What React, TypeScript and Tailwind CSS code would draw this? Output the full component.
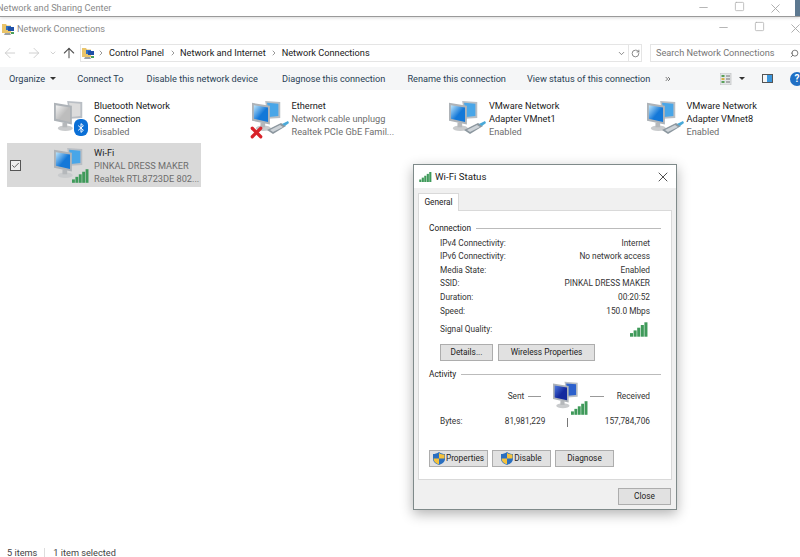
import { ArrowLeft, ArrowRight, ArrowUp, Check, ChevronDown, ChevronRight, ChevronsRight, Minus, RotateCw, Search, Square, X } from "lucide-react";

const Bars = ({ className }: { className: string }) => (
  <svg viewBox="0 0 20 16" className={className}>
    <rect x="0" y="12" width="3.4" height="4" fill="#3f9a5a" />
    <rect x="4" y="9" width="3.4" height="7" fill="#3f9a5a" />
    <rect x="8" y="6" width="3.4" height="10" fill="#3f9a5a" />
    <rect x="12" y="3" width="3.4" height="13" fill="#3f9a5a" />
    <rect x="16" y="0" width="3.4" height="16" fill="#3f9a5a" />
  </svg>
);

const Monitors = ({ gray, dark, className }: { gray?: boolean; dark?: boolean; className: string }) => {
  const id = gray ? "scr-gray" : dark ? "scr-dark" : "scr-blue";
  const from = gray ? "#f2f2f2" : dark ? "#4f7be0" : "#bfe6fb";
  const to = gray ? "#bdbdbd" : dark ? "#14299e" : "#1478d8";
  const back = gray ? "#dcdcdc" : dark ? "#2c60cc" : "#49a6e8";
  return (
    <svg viewBox="0 0 36 34" className={className}>
      <defs>
        <linearGradient id={id} x1="0" y1="0" x2="1" y2="1">
          <stop offset="0" stopColor={from} />
          <stop offset="0.55" stopColor={to} />
          <stop offset="1" stopColor={to} />
        </linearGradient>
      </defs>
      <path d="M15 1 L31 2 V19 L18 20 Z" fill="#b9bec4" />
      <path d="M17 3 L29 4 V17 L19 18 Z" fill={back} />
      <path d="M1 3 L20 6 V26 L1 22 Z" fill="#aeb3b8" />
      <path d="M3 5.5 L18 8 V23.5 L3 20 Z" fill={`url(#${id})`} />
      <ellipse cx="13" cy="30" rx="8" ry="3" fill="#c9cbcd" />
      <rect x="10" y="24" width="5" height="5" fill="#b5b8bb" />
    </svg>
  );
};

const FolderNet = () => (
  <svg viewBox="0 0 12 12" className="w-[12px] h-[12px] shrink-0">
    <path d="M0 1 H4 L5 2.5 H9 V10 H0 Z" fill="#e9c46a" />
    <rect x="4" y="3" width="5" height="4" fill="#2f6fc0" />
    <rect x="6" y="4" width="6" height="4" fill="#1f4fa8" />
    <path d="M3 10 H8 L9 12 H2 Z" fill="#9aa0a6" />
    <rect x="9" y="9" width="3" height="2" fill="#4aa05a" />
  </svg>
);

const Plug = () => (
  <svg viewBox="0 0 22 14" className="absolute left-[16px] top-[21px] w-[22px] h-[14px]">
    <path d="M0 9 L14 2 L19 5 L6 13 Z" fill="#8c979f" />
    <path d="M3 9 L13 4 L16 6 L6 11 Z" fill="#cdd3d8" />
    <path d="M15 3 L21 0 L22 2 L18 5 Z" fill="#49a9d9" />
  </svg>
);

const Tile = ({ icon, title, lines, selected }: { icon: React.ReactNode; title: string[]; lines: string[]; selected?: boolean }) => (
  <div className={`flex items-center h-[44px] mr-[3.5px] ${selected ? "bg-[#d9d9d9]" : ""}`}>
    <div className="w-[46px] pl-[3px] shrink-0">
      {selected && (
        <div className="w-[11px] h-[11px] border border-[#555] bg-[#eee] flex items-center justify-center">
          <Check className="w-[9px] h-[9px] text-[#333]" strokeWidth={2} />
        </div>
      )}
    </div>
    <div className="relative w-[41px] h-[36px] shrink-0">{icon}</div>
    <div className="text-[9.2px] leading-[13px] whitespace-nowrap">
      {title.map((t) => (
        <div key={t} className="text-[#222]">{t}</div>
      ))}
      {lines.map((t) => (
        <div key={t} className="text-[#6d6d6d]">{t}</div>
      ))}
    </div>
  </div>
);

const Shield = () => (
  <svg viewBox="0 0 12 13" className="w-[12px] h-[13px] shrink-0">
    <path d="M6 0 C8 1.5 10 2 12 2 V7 C12 10 9 12 6 13 C3 12 0 10 0 7 V2 C2 2 4 1.5 6 0 Z" fill="#2a6fc0" />
    <path d="M6 1 V6.5 H11.5 V2.6 C9.5 2.5 7.5 2 6 1 Z" fill="#f5c23c" />
    <path d="M6 6.5 V12.5 C3.5 11.5 .6 10 .6 6.5 Z" fill="#f5c23c" />
  </svg>
);

const Btn = ({ w, children }: { w: string; children: React.ReactNode }) => (
  <div className={`${w} h-[17px] flex items-center justify-center bg-[#e1e1e1] border border-[#adadad] text-[8.3px] text-[#222] shrink-0 whitespace-nowrap`}>
    {children}
  </div>
);

const Row = ({ label, value }: { label: string; value: string }) => (
  <div className="flex justify-between h-[13.6px] items-center">
    <span>{label}</span>
    <span>{value}</span>
  </div>
);

const Legend = ({ text }: { text: string }) => (
  <div className="flex items-center gap-[5px] h-[12px] text-[#222]">
    <span>{text}</span>
    <div className="flex-1 h-px bg-[#bbb]" />
  </div>
);

const WinButtons = ({ className }: { className: string }) => (
  <div className={`flex text-[#aaa] ${className}`}>
    <div className="w-[36px] flex justify-center"><Minus className="w-[13px] h-[13px]" strokeWidth={1.6} /></div>
    <div className="w-[36px] flex justify-center"><Square className="w-[11px] h-[11px]" strokeWidth={1.6} /></div>
    <div className="w-[36px] flex justify-center"><X className="w-[15px] h-[15px]" strokeWidth={1.5} /></div>
  </div>
);

const WifiStatus = () => (
  <div className="absolute left-[413px] top-[164px] w-[264px] h-[346px] flex flex-col border border-[#7f8a8a] bg-[#f0f0f0] shadow-[0_4px_12px_rgba(0,0,0,0.3)] font-['Roboto',sans-serif] text-[8.3px] text-[#333]">
    <div className="h-[23px] pt-[1px] bg-white flex items-center pl-[5px] pr-[5px] shrink-0">
      <Bars className="w-[13px] h-[10px]" />
      <span className="ml-[3px] text-[9.7px] text-[#222] flex-1">Wi-Fi Status</span>
      <X className="w-[16px] h-[16px] text-[#333]" strokeWidth={1.3} />
    </div>
    <div className="px-[4px] pt-[5px] flex-1 flex flex-col">
      <div className="w-[41px] h-[18px] bg-white border border-b-0 border-[#d9d9d9] flex items-center justify-center -mb-px relative text-[#222]">General</div>
      <div className="h-[270px] bg-white border border-[#d9d9d9] pt-[11px] px-[10px]">
        <Legend text="Connection" />
        <div className="pl-[11px] pr-[11px] pt-[2px]">
          <Row label="IPv4 Connectivity:" value="Internet" />
          <Row label="IPv6 Connectivity:" value="No network access" />
          <Row label="Media State:" value="Enabled" />
          <Row label="SSID:" value="PINKAL DRESS MAKER" />
          <Row label="Duration:" value="00:20:52" />
          <Row label="Speed:" value="150.0 Mbps" />
          <div className="flex justify-between items-center h-[24px] pr-[2px]">
            <span>Signal Quality:</span>
            <Bars className="w-[18px] h-[15px]" />
          </div>
          <div className="flex gap-[5px] mt-[2px]">
            <Btn w="w-[53px]">Details...</Btn>
            <Btn w="w-[97px]">Wireless Properties</Btn>
          </div>
        </div>
        <div className="mt-[8px]"><Legend text="Activity" /></div>
        <div className="h-[69px] pl-[11px] pr-[11px] flex">
          <div className="w-[66px] pt-[34px]">Bytes:</div>
          <div className="w-[40px] flex flex-col items-end pt-[9px]">
            <div className="h-[25px] pr-[4px] flex items-start gap-[4px] whitespace-nowrap">
              <span>Sent</span>
              <div className="w-[13px] h-px bg-[#999] mt-[6px]" />
            </div>
            <span className="whitespace-nowrap">81,981,229</span>
          </div>
          <div className="w-[60px] pl-[7px] relative">
            <Monitors dark className="w-[30px] h-[28px]" />
            <Bars className="absolute left-[26px] top-[20px] w-[17px] h-[14px]" />
            <div className="absolute left-[45px] top-[15px] w-[14px] h-px bg-[#999]" />
            <div className="w-px h-[9px] bg-[#777] ml-[15px] mt-[9px]" />
          </div>
          <div className="flex-1 flex flex-col items-end pt-[9px]">
            <span className="h-[25px]">Received</span>
            <span className="whitespace-nowrap">157,784,706</span>
          </div>
        </div>
        <div className="flex gap-[4px]">
          <Btn w="w-[59px]"><Shield /><span className="ml-[1px]">Properties</span></Btn>
          <Btn w="w-[59px]"><Shield /><span className="ml-[1px]">Disable</span></Btn>
          <Btn w="w-[59px]">Diagnose</Btn>
        </div>
      </div>
      <div className="flex justify-end mt-[8px] pr-px">
        <Btn w="w-[53px]">Close</Btn>
      </div>
    </div>
  </div>
);

const App = () => {
  return (
    <div className="relative w-[800px] h-[557px] overflow-hidden bg-white flex flex-col font-['Roboto',sans-serif]">
      <div className="h-[17px] shrink-0 flex items-center border-b border-[#9a9a9a] shadow-[0_1px_3px_rgba(0,0,0,0.15)]">
        <span className="-ml-[3px] text-[9.2px] text-[#8a8a8a] flex-1">Network and Sharing Center</span>
        <WinButtons className="mr-[2px]" />
        <div className="w-[5px] h-[16px] bg-[#5c7890]" />
      </div>
      <div className="h-[23px] shrink-0 flex items-center">
        <div className="ml-[2px]"><FolderNet /></div>
        <span className="ml-[3px] text-[9.2px] text-[#8a8a8a] flex-1">Network Connections</span>
        <WinButtons className="-mr-[13px]" />
      </div>
      <div className="h-[27px] pb-px shrink-0 flex items-center">
        <ArrowLeft className="w-[16px] h-[16px] text-[#ccc] ml-[2px] shrink-0" strokeWidth={1.4} />
        <ArrowRight className="w-[16px] h-[16px] text-[#ccc] ml-[8px] shrink-0" strokeWidth={1.4} />
        <ChevronDown className="w-[8px] h-[8px] text-[#bbb] ml-[7px] shrink-0" />
        <ArrowUp className="w-[16px] h-[16px] text-[#555] ml-[4px] shrink-0" strokeWidth={1.6} />
        <div className="ml-[3px] w-[562px] h-[18px] shrink-0 border border-[#e5e5e5] flex items-center text-[9.2px] text-[#222] whitespace-nowrap">
          <div className="ml-[1px]"><FolderNet /></div>
          <ChevronRight className="w-[8px] h-[8px] text-[#666] ml-[3px]" />
          <span className="ml-[4px]">Control Panel</span>
          <ChevronRight className="w-[8px] h-[8px] text-[#666] ml-[5px]" />
          <span className="ml-[3px]">Network and Internet</span>
          <ChevronRight className="w-[8px] h-[8px] text-[#666] ml-[4px]" />
          <span className="ml-[4px] flex-1">Network Connections</span>
          <ChevronDown className="w-[9px] h-[9px] text-[#666] mr-[2px]" />
          <div className="w-[13px] h-[16px] border-l border-[#e5e5e5] flex items-center justify-center">
            <RotateCw className="w-[9px] h-[9px] text-[#666]" />
          </div>
        </div>
        <div className="ml-[8px] flex-1 h-[18px] border border-[#e5e5e5] border-r-0 flex items-center justify-between pl-[5px] pr-[1px] text-[9.2px] text-[#777] whitespace-nowrap">
          <span>Search Network Connections</span>
          <Search className="w-[9px] h-[9px] text-[#555] -scale-x-100" />
        </div>
      </div>
      <div className="h-[23px] shrink-0 bg-[#f5f6f7] flex items-center text-[9.2px] text-[#2a3f55] whitespace-nowrap">
        <span className="ml-[9px]">Organize</span>
        <span className="ml-[5px] w-0 h-0 border-x-[3px] border-x-transparent border-t-[3px] border-t-[#333]" />
        <span className="ml-[21px]">Connect To</span>
        <span className="ml-[23px]">Disable this network device</span>
        <span className="ml-[24px]">Diagnose this connection</span>
        <span className="ml-[22px]">Rename this connection</span>
        <span className="ml-[21px]">View status of this connection</span>
        <ChevronsRight className="ml-[14px] w-[8px] h-[8px] text-[#333] shrink-0" />
        <div className="ml-auto w-[80px] flex items-center shrink-0">
          <svg viewBox="0 0 12 12" className="w-[12px] h-[12px] shrink-0">
            <rect x="0" y="0" width="11" height="12" fill="#e3e6e8" stroke="#aaa" strokeWidth=".5" />
            <rect x="1.5" y="2" width="3" height="2" fill="#5aa05a" />
            <rect x="1.5" y="5" width="3" height="2" fill="#d8b24a" />
            <rect x="1.5" y="8" width="3" height="2" fill="#5aa05a" />
            <path d="M6 3H10M6 6H10M6 9H10" stroke="#555" strokeWidth=".8" />
          </svg>
          <span className="ml-[7px] w-0 h-0 border-x-[3px] border-x-transparent border-t-[3px] border-t-[#333]" />
          <div className="ml-[17px] w-[11px] h-[9px] border border-[#555] flex justify-end shrink-0">
            <div className="w-[5px] bg-[#3a96dd]" />
          </div>
          <div className="ml-[17px] w-[14px] h-[14px] rounded-full bg-[#1f6fc4] text-white text-[10px] font-bold flex items-center justify-center shrink-0">?</div>
        </div>
      </div>
      <div className="flex-1 grid grid-cols-[197.5px_197.5px_197.5px_197.5px] auto-rows-[47px] pl-[7px] pt-[6px]">
        <Tile
          title={["Bluetooth Network", "Connection"]}
          lines={["Disabled"]}
          icon={
            <>
              <Monitors gray className="w-[34px] h-[32px]" />
              <div className="absolute left-[21px] top-[19px] w-[14px] h-[17px] rounded-[6px] bg-[#0a6fd6] flex items-center justify-center">
                <svg viewBox="0 0 10 14" className="w-[8px] h-[12px]">
                  <path d="M1.5 4 L8 9.8 L5 12.5 V1.5 L8 4.2 L1.5 10" fill="none" stroke="#fff" strokeWidth="1.2" />
                </svg>
              </div>
            </>
          }
        />
        <Tile
          title={["Ethernet"]}
          lines={["Network cable unplugg", "Realtek PCIe GbE Famil..."]}
          icon={
            <>
              <Monitors className="w-[34px] h-[32px]" />
              <Plug />
              <X className="absolute left-[-3px] top-[24px] w-[17px] h-[17px] text-[#d8232a]" strokeWidth={4.5} />
            </>
          }
        />
        <Tile
          title={["VMware Network", "Adapter VMnet1"]}
          lines={["Enabled"]}
          icon={
            <>
              <Monitors className="w-[34px] h-[32px]" />
              <Plug />
            </>
          }
        />
        <Tile
          title={["VMware Network", "Adapter VMnet8"]}
          lines={["Enabled"]}
          icon={
            <>
              <Monitors className="w-[34px] h-[32px]" />
              <Plug />
            </>
          }
        />
        <Tile
          selected
          title={["Wi-Fi"]}
          lines={["PINKAL DRESS MAKER", "Realtek RTL8723DE 802..."]}
          icon={
            <>
              <Monitors className="w-[34px] h-[32px]" />
              <Bars className="absolute left-[19px] top-[22px] w-[17px] h-[14px]" />
            </>
          }
        />
      </div>
      <div className="h-[9px] shrink-0 flex items-start text-[9.2px] leading-[10px] text-[#444] pl-[7px] whitespace-nowrap">
        <span>5 items</span>
        <span className="ml-[7px] w-px h-[9px] bg-[#ddd]" />
        <span className="ml-[8px]">1 item selected</span>
      </div>
      <WifiStatus />
    </div>
  );
};

export default App;
